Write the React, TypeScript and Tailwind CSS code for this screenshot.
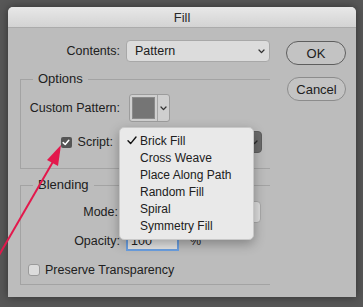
import React from "react"

function Chevron({ color = "#333" }: { color?: string }) {
    return (
        <svg width="7" height="5" viewBox="0 0 7 5" fill="none">
            <polyline points="1,1 3.5,3.6 6,1" stroke={color} strokeWidth="1.3" strokeLinecap="round" strokeLinejoin="round" />
        </svg>
    )
}

function Select({ text, width, dark }: { text?: string; width: number; dark?: boolean }) {
    return (
        <div
            className={
                dark
                    ? "flex items-center justify-end h-[22px] rounded-[4px] bg-[#6b6b6b] border border-[#5e5e5e] pr-[3px]"
                    : "flex items-center justify-between h-[22px] rounded-[4px] bg-[#dcdcdc] border border-[#a8a8a8] pl-[8px] pr-[4px]"
            }
            style={{ width }}
        >
            {text && <span>{text}</span>}
            <Chevron color={dark ? "#2a2a2a" : "#333"} />
        </div>
    )
}

const menuItems = ["Brick Fill", "Cross Weave", "Place Along Path", "Random Fill", "Spiral", "Symmetry Fill"]

export default function App() {
    return (
        <div
            className="relative w-[363px] h-[307px] overflow-hidden bg-[#575757] pt-[7px] pl-[8px] text-[12.5px] text-[#202020] leading-none"
            style={{ fontFamily: '"Liberation Sans", Helvetica, Arial, sans-serif' }}
        >
            {/* dialog */}
            <div className="w-[348px] h-[290px] rounded-t-[5px] bg-[#bcbcbc] shadow-[0_0_8px_rgba(0,0,0,0.45)] overflow-hidden">
                <div className="h-[21px] flex items-center justify-center bg-gradient-to-b from-[#e8e8e8] to-[#d3d3d3] border-b border-[#ababab] text-[13px] text-[#2a2a2a]">
                    Fill
                </div>

                <div className="flex">
                    {/* left column */}
                    <div className="w-[250px] ml-[12px]">
                        <div className="flex items-center mt-[12px]">
                            <div className="w-[100px] text-right">Contents:</div>
                            <div className="ml-[6px]">
                                <Select text="Pattern" width={144} />
                            </div>
                        </div>

                        <fieldset className="mt-[10px] border-t border-l border-b border-[#a3a3a3] pb-[15px]">
                            <legend className="ml-[12px] px-[5px] h-[14px] text-[13px]">Options</legend>
                            <div className="flex items-center mt-[8px]">
                                <div className="w-[99px] text-right">Custom Pattern:</div>
                                <div className="ml-[9px] flex h-[28px] w-[41px] rounded-[3px] border border-[#9c9c9c] bg-[#cfcfcf]">
                                    <div className="m-[2px] w-[23px] bg-[#757575] border border-[#8a8a8a]" />
                                    <div className="flex-1 flex items-center justify-center border-l border-[#a5a5a5]">
                                        <Chevron />
                                    </div>
                                </div>
                            </div>
                            <div className="flex items-center mt-[9px]">
                                <div className="w-[99px] flex items-center justify-end pr-[7px]">
                                    <div className="w-[11px] h-[11px] rounded-[2px] bg-[#555555] flex items-center justify-center">
                                        <svg width="8" height="7" viewBox="0 0 8 7" fill="none">
                                            <polyline points="1.2,3.6 3.2,5.5 6.8,1.3" stroke="#fff" strokeWidth="1.5" strokeLinecap="round" strokeLinejoin="round" />
                                        </svg>
                                    </div>
                                    <span className="ml-[6px]">Script:</span>
                                </div>
                                <Select width={142} dark />
                            </div>
                        </fieldset>

                        <fieldset className="mt-[9px] border-t border-l border-b border-[#a3a3a3] pb-[7px]">
                            <legend className="ml-[12px] px-[5px] h-[14px] text-[13px]">Blending</legend>
                            <div className="flex items-center mt-[9px]">
                                <div className="w-[97px] text-right">Mode:</div>
                                <div className="ml-[8px]">
                                    <Select width={135} />
                                </div>
                            </div>
                            <div className="flex items-center mt-[9px]">
                                <div className="w-[99px] text-right">Opacity:</div>
                                <div className="ml-[6px] w-[53px] h-[19px] border-2 border-[#6b9fe0] bg-[#e4e4e4] flex items-center pl-[3px]">
                                    100
                                </div>
                                <span className="ml-[11px]">%</span>
                            </div>
                            <div className="flex items-center mt-[13px] ml-[7px]">
                                <div className="w-[12px] h-[12px] rounded-[3px] border border-[#9a9a9a] bg-[#dcdcdc]" />
                                <span className="ml-[5px]">Preserve Transparency</span>
                            </div>
                        </fieldset>
                    </div>

                    {/* right column */}
                    <div className="ml-[16px] mt-[13px] flex flex-col gap-[12px]">
                        <div className="w-[60px] h-[24px] rounded-full border-[1.5px] border-[#5e5e5e] bg-[#c3c3c3] flex items-center justify-center text-[13px]">
                            OK
                        </div>
                        <div className="w-[59px] h-[24px] ml-[1px] rounded-full border border-[#8c8c8c] bg-[#c3c3c3] flex items-center justify-center text-[13px]">
                            Cancel
                        </div>
                    </div>
                </div>
            </div>

            {/* popup menu */}
            <div className="absolute left-[119px] top-[127px] w-[135px] rounded-[5px] bg-[#e9e9e9] border border-[#c8c8c8] shadow-[0_4px_12px_rgba(0,0,0,0.3)] pt-[4px] pb-[5px] text-[12px]">
                {menuItems.map((item, i) => (
                    <div key={item} className="h-[17px] flex items-center">
                        <div className="w-[20px] flex justify-end pr-[3px]">
                            {i === 0 && (
                                <svg width="10" height="9" viewBox="0 0 10 9" fill="none">
                                    <polyline points="1,4.8 3.6,7.6 9,1" stroke="#111" strokeWidth="1.4" strokeLinecap="round" strokeLinejoin="round" />
                                </svg>
                            )}
                        </div>
                        <span>{item}</span>
                    </div>
                ))}
            </div>

            {/* red arrow */}
            <svg className="absolute left-0 top-0 pointer-events-none" width="363" height="307" viewBox="0 0 363 307">
                <line x1="-2" y1="257" x2="54" y2="160" stroke="#e3184c" strokeWidth="2" />
                <polygon points="61,145 47,160 58,166" fill="#e3184c" />
            </svg>
        </div>
    )
}
